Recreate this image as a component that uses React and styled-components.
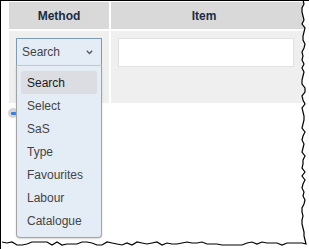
import React from "react";
import styled, { createGlobalStyle } from "styled-components";

const GlobalStyle = createGlobalStyle`
  html, body { margin: 0; padding: 0; background: #fff; }
  body { font-family: "Liberation Sans", Arial, sans-serif; }
`;

const Frame = styled.div`
  position: relative;
  width: 309px;
  height: 249px;
  box-sizing: border-box;
  border-left: 1px solid #000;
  border-top: 1px solid #000;
  background: #fff;
  overflow: hidden;
`;

const Table = styled.div`
  display: grid;
  grid-template-columns: 100px 200px;
  grid-template-rows: 27px 72px;
  gap: 2px;
  margin: 1px 0 0 8px;
`;

const HeadCell = styled.div`
  background: #d9d9d9;
  display: flex;
  align-items: center;
  justify-content: center;
  font-size: 12px;
  font-weight: bold;
  color: #1b2b44;
  padding-right: ${p => p.$shift || 0}px;
`;

const BodyCell = styled.div`
  position: relative;
  background: #efefef;
  padding: 7px;
  box-sizing: border-box;
`;

const SelectBox = styled.div`
  box-sizing: border-box;
  width: 86px;
  height: 28px;
  background: #e4ecf6;
  border: 1px solid #7d9bb3;
  display: flex;
  align-items: center;
  justify-content: space-between;
  padding: 0 8px 0 5px;
  font-size: 12px;
  color: #444;
`;

const Input = styled.div`
  box-sizing: border-box;
  width: 176px;
  height: 29px;
  background: #fff;
  border: 1px solid #e2e2e2;
`;

const Menu = styled.ul`
  position: absolute;
  z-index: 2;
  left: 7px;
  top: 34px;
  width: 86px;
  height: 173px;
  box-sizing: border-box;
  margin: 0;
  padding: 5px 4px;
  list-style: none;
  background: #e4ecf6;
  border: 1px solid #a3a3a3;
  border-top-color: #c8c8c8;
  border-radius: 0 0 4px 4px;
  box-shadow: 0 1px 2px rgba(0, 0, 0, 0.15);
`;

const Option = styled.li`
  height: 23px;
  display: flex;
  align-items: center;
  padding-left: 6px;
  border-radius: 2px;
  font-size: 12px;
  color: ${p => (p.$active ? "#1a1a1a" : "#444")};
  background: ${p => (p.$active ? "#dcdde3" : "transparent")};
`;

const Handle = styled.div`
  width: 10px;
  height: 10px;
  margin: 5px 0 0 7px;
  border-radius: 50%;
  background: #d6d6d6;
  display: flex;
  align-items: center;
  justify-content: center;
  &::after {
    content: "";
    width: 5px;
    height: 3px;
    background: #3b7de0;
    border-radius: 1px;
  }
`;

const Torn = styled.svg`
  position: absolute;
  left: 0;
  top: 0;
  pointer-events: none;
  z-index: 5;
`;

const options = ["Search", "Select", "SaS", "Type", "Favourites", "Labour", "Catalogue"];

function jag(seed) {
  let s = seed;
  return () => {
    s = (s * 9301 + 49297) % 233280;
    return s / 233280;
  };
}

function tornPath() {
  const r = jag(7);
  const pts = [];
  for (let y = -1; y <= 240; y += 4) {
    pts.push([302 + Math.round(r() * 4 - 1.5), y]);
  }
  pts.push([305, 243]);
  for (let x = 301; x >= -1; x -= 5) {
    pts.push([x, 242 + Math.round(r() * 4 - 1.5)]);
  }
  return pts;
}

const Edge = () => {
  const pts = tornPath();
  const line = pts.map(p => p.join(",")).join(" ");
  const fill = `${line} -1,249 309,249 309,-1`;
  return (
    <Torn width="309" height="249" viewBox="0 0 309 249">
      <polygon points={fill} fill="#fff" />
      <polyline points={line} fill="none" stroke="#000" strokeWidth="1.2" />
    </Torn>
  );
};

const Chevron = () => (
  <svg width="7" height="5" viewBox="0 0 7 5">
    <path d="M0.8 0.8 L3.5 3.6 L6.2 0.8" fill="none" stroke="#5a5a5a" strokeWidth="1.4" />
  </svg>
);

export default function App() {
  return (
    <>
      <GlobalStyle />
      <Frame>
        <Table>
          <HeadCell>Method</HeadCell>
          <HeadCell $shift={14}>Item</HeadCell>
          <BodyCell>
            <SelectBox>
              <span>Search</span>
              <Chevron />
            </SelectBox>
            <Menu>
              {options.map((o, i) => (
                <Option key={o} $active={i === 0}>{o}</Option>
              ))}
            </Menu>
          </BodyCell>
          <BodyCell>
            <Input />
          </BodyCell>
        </Table>
        <Handle />
        <Edge />
      </Frame>
    </>
  );
}
